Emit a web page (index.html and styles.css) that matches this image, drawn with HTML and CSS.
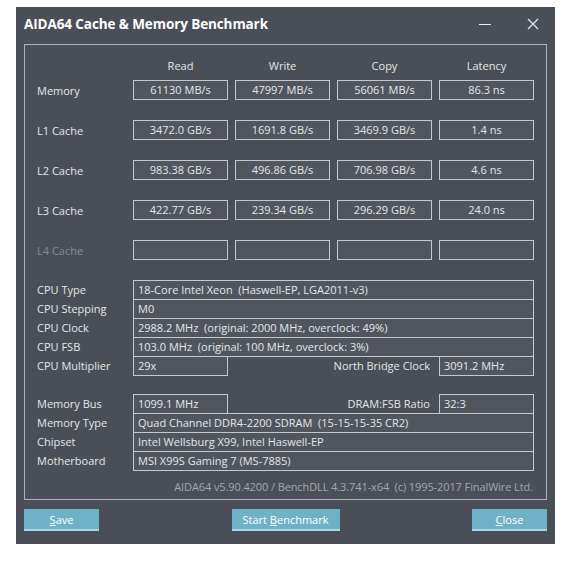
FILE: index.html
```html
<!DOCTYPE html>
<html>
<head>
<meta charset="utf-8">
<link rel="stylesheet" href="styles.css">
</head>
<body>
<div class="window">
  <div class="titlebar">
    <span class="title">AIDA64 Cache &amp; Memory Benchmark</span>
    <div class="controls">
      <svg class="ctl" width="14" height="14" viewBox="0 0 14 14"><line x1="1" y1="7.5" x2="13" y2="7.5" stroke="#e8eaec" stroke-width="1"/></svg>
      <svg class="ctl" width="14" height="14" viewBox="0 0 14 14"><path d="M2 2 L12 12 M12 2 L2 12" stroke="#e8eaec" stroke-width="1.2" fill="none"/></svg>
    </div>
  </div>
  <div class="panel">
    <div class="brow head">
      <span class="lbl"></span>
      <span class="hcell">Read</span><span class="hcell">Write</span><span class="hcell">Copy</span><span class="hcell">Latency</span>
    </div>
    <div class="brow">
      <span class="lbl">Memory</span>
      <span class="box">61130 MB/s</span><span class="box">47997 MB/s</span><span class="box">56061 MB/s</span><span class="box">86.3 ns</span>
    </div>
    <div class="brow">
      <span class="lbl">L1 Cache</span>
      <span class="box">3472.0 GB/s</span><span class="box">1691.8 GB/s</span><span class="box">3469.9 GB/s</span><span class="box">1.4 ns</span>
    </div>
    <div class="brow">
      <span class="lbl">L2 Cache</span>
      <span class="box">983.38 GB/s</span><span class="box">496.86 GB/s</span><span class="box">706.98 GB/s</span><span class="box">4.6 ns</span>
    </div>
    <div class="brow">
      <span class="lbl">L3 Cache</span>
      <span class="box">422.77 GB/s</span><span class="box">239.34 GB/s</span><span class="box">296.29 GB/s</span><span class="box">24.0 ns</span>
    </div>
    <div class="brow">
      <span class="lbl dim">L4 Cache</span>
      <span class="box"></span><span class="box"></span><span class="box"></span><span class="box"></span>
    </div>

    <div class="info cpu">
      <div class="irow"><span class="lbl">CPU Type</span><span class="ibox wide">18-Core Intel Xeon &nbsp;(Haswell-EP, LGA2011-v3)</span></div>
      <div class="irow"><span class="lbl">CPU Stepping</span><span class="ibox wide">M0</span></div>
      <div class="irow"><span class="lbl">CPU Clock</span><span class="ibox wide">2988.2 MHz &nbsp;(original: 2000 MHz, overclock: 49%)</span></div>
      <div class="irow"><span class="lbl">CPU FSB</span><span class="ibox wide">103.0 MHz &nbsp;(original: 100 MHz, overclock: 3%)</span></div>
      <div class="irow"><span class="lbl">CPU Multiplier</span><span class="ibox short">29x</span><span class="rlbl">North Bridge Clock</span><span class="ibox short2">3091.2 MHz</span></div>
    </div>

    <div class="info mem">
      <div class="irow"><span class="lbl">Memory Bus</span><span class="ibox short">1099.1 MHz</span><span class="rlbl">DRAM:FSB Ratio</span><span class="ibox short2">32:3</span></div>
      <div class="irow"><span class="lbl">Memory Type</span><span class="ibox wide">Quad Channel DDR4-2200 SDRAM &nbsp;(15-15-15-35 CR2)</span></div>
      <div class="irow"><span class="lbl">Chipset</span><span class="ibox wide">Intel Wellsburg X99, Intel Haswell-EP</span></div>
      <div class="irow"><span class="lbl">Motherboard</span><span class="ibox wide">MSI X99S Gaming 7 (MS-7885)</span></div>
    </div>

    <div class="footer">AIDA64 v5.90.4200 / BenchDLL 4.3.741-x64 &nbsp;(c) 1995-2017 FinalWire Ltd.</div>
  </div>
  <div class="buttons">
    <button class="btn small"><u>S</u>ave</button>
    <button class="btn big">Start <u>B</u>enchmark</button>
    <button class="btn small"><u>C</u>lose</button>
  </div>
</div>
</body>
</html>
```
FILE: styles.css
```css
html, body {
  margin: 0;
  padding: 0;
  background: #ffffff;
}
body {
  font-family: "Open Sans", "Noto Sans", sans-serif;
  font-size: 11px;
  color: #e4e6e8;
}
.window {
  margin: 7px 0 0 16px;
  width: 539px;
  height: 537px;
  background: #4a4f57;
  display: flex;
  flex-direction: column;
  box-sizing: border-box;
}
.titlebar {
  height: 37px;
  display: flex;
  align-items: center;
  padding: 0 15px 3px 8px;
  box-sizing: border-box;
}
.title {
  font-size: 13.5px;
  font-weight: 700;
  color: #ffffff;
  flex: 1;
  letter-spacing: -0.1px;
}
.controls {
  display: flex;
  gap: 34px;
  align-items: center;
}
.ctl { display: block; }
.panel {
  margin: 0 8px;
  border: 1px solid #aeb2b8;
  height: 456px;
  box-sizing: border-box;
  padding: 11px 12px 0 12px;
  display: flex;
  flex-direction: column;
}
.brow {
  display: flex;
  align-items: center;
  gap: 7px;
  height: 20px;
  margin-bottom: 20px;
}
.brow.head {
  height: 19px;
  margin-bottom: 5px;
}
.lbl {
  width: 89px;
  flex: none;
  white-space: nowrap;
}
.lbl.dim { color: #868b92; }
.hcell {
  width: 95px;
  text-align: center;
}
.box {
  width: 95px;
  height: 20px;
  box-sizing: border-box;
  border: 1px solid #c4c7cc;
  background: #51565e;
  text-align: center;
  line-height: 18px;
  white-space: nowrap;
}
.info {
  display: flex;
  flex-direction: column;
}
.info.mem { margin-top: 19px; }
.irow {
  display: flex;
  align-items: center;
  height: 19px;
}
.irow .lbl { width: 96px; }
.ibox {
  height: 20px;
  box-sizing: border-box;
  border: 1px solid #c4c7cc;
  background: #51565e;
  line-height: 18px;
  padding-left: 4px;
  white-space: nowrap;
  margin-top: 1px;
}
.ibox.wide { width: 401px; }
.ibox.short { width: 95px; }
.ibox.short2 { width: 95px; }
.rlbl {
  flex: 1;
  text-align: right;
  padding-right: 9px;
  white-space: nowrap;
}
.footer {
  margin-top: 10px;
  text-align: right;
  padding-right: 1px;
  color: #a3a7ad;
  height: 14px;
  line-height: 14px;
  letter-spacing: -0.1px;
}
.buttons {
  display: flex;
  justify-content: space-between;
  padding: 0 8px;
  margin-top: 9px;
}
.btn {
  font-family: "Open Sans", "Noto Sans", sans-serif;
  font-size: 11px;
  color: #ffffff;
  background: #6fb2c7;
  border: none;
  border-bottom: 2px solid #a7d6e4;
  height: 22px;
  padding: 0;
  margin: 0;
}
.btn.small { width: 75px; }
.btn.big { width: 108px; }
.btn u { text-decoration: underline; }
```
